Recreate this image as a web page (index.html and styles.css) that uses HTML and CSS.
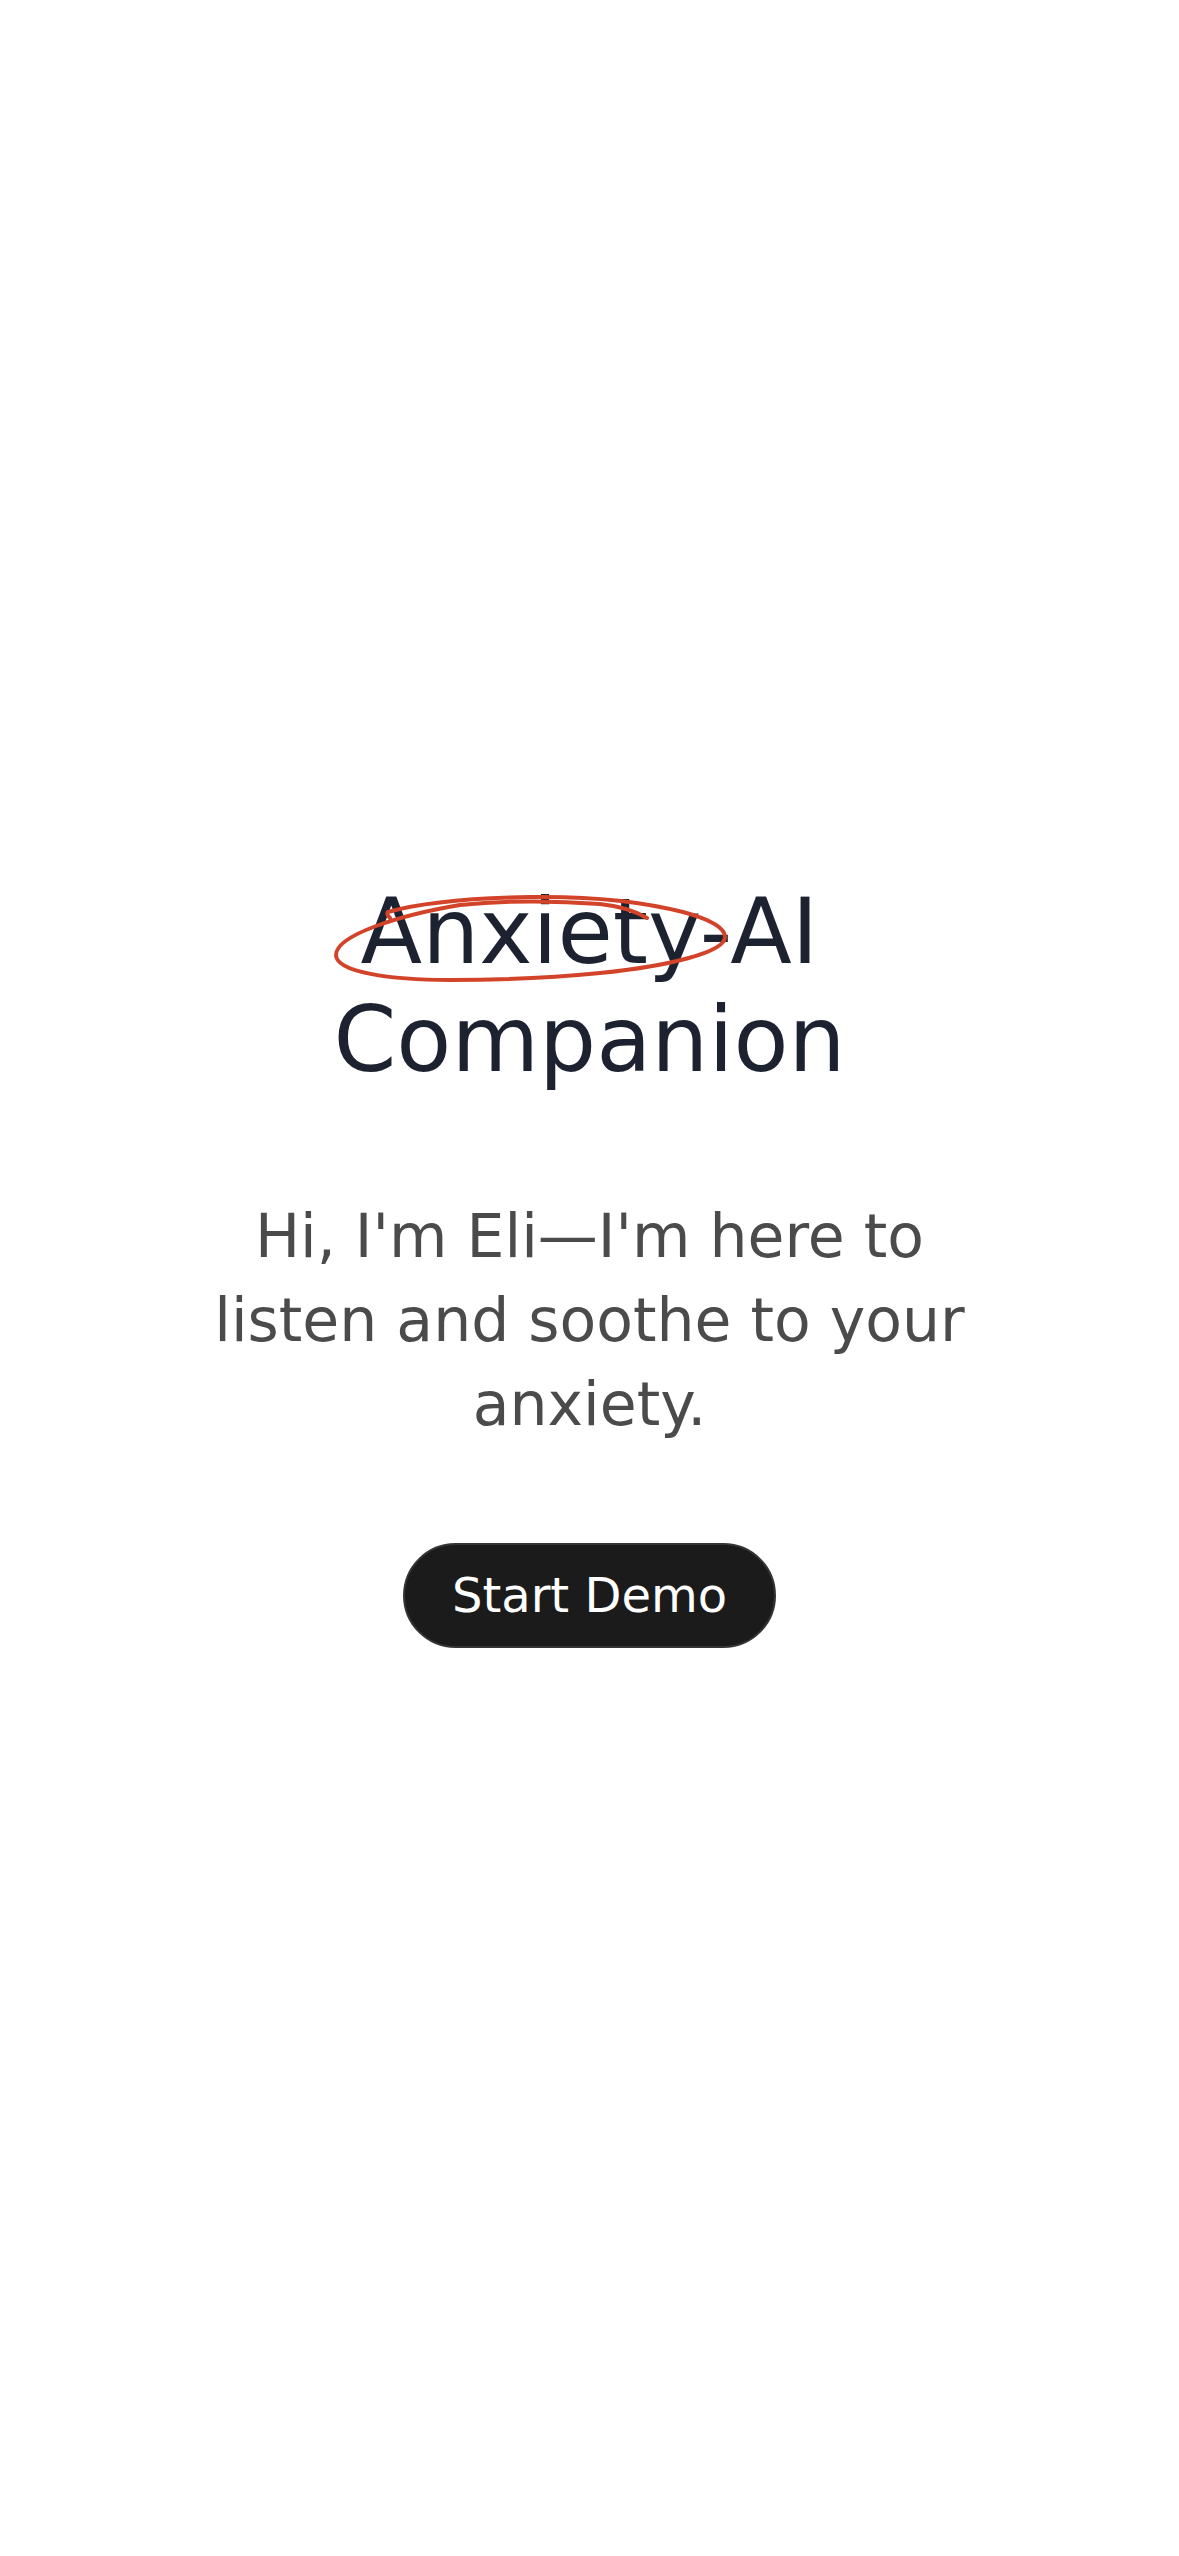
FILE: index.html
```html
<!DOCTYPE html>
<html lang="en">
<head>
<meta charset="utf-8">
<title>Anxiety-AI Companion</title>
<link rel="stylesheet" href="styles.css">
</head>
<body>
<main class="page">
  <section class="hero">
    <h1 class="title">
      <svg class="scribble" width="400" height="105" viewBox="0 0 400 105" aria-hidden="true">
        <path d="M 60 33 Q 56 29 58 27 C 90 18, 140 13, 200 12 C 260 11, 310 16, 353 27 C 375 33, 395 41, 395 52 C 395 67, 340 81, 270 88 C 230 92, 180 95, 120 95 C 60 95, 6 87, 6 70 C 6 50, 70 30, 130 20 C 180 15, 230 16, 270 19 C 290 21, 305 26, 317 33" />
      </svg>
      Anxiety-AI Companion
    </h1>
    <p class="subtitle">Hi, I'm Eli—I'm here to listen and soothe to your anxiety.</p>
    <button class="cta" type="button">Start Demo</button>
  </section>
</main>
</body>
</html>
```

FILE: styles.css
```css
html, body {
  margin: 0;
  padding: 0;
  background: #ffffff;
}

body {
  font-family: "DejaVu Sans", "Noto Sans", sans-serif;
}

.page {
  min-height: 2556px;
  box-sizing: border-box;
  padding-top: 878px;
  display: flex;
  flex-direction: column;
  align-items: center;
}

.hero {
  width: 800px;
  display: flex;
  flex-direction: column;
  align-items: center;
  text-align: center;
}

.title {
  position: relative;
  margin: 0;
  width: 100%;
  font-size: 90px;
  line-height: 108px;
  font-weight: 400;
  color: #1c2230;
}

.scribble {
  position: absolute;
  left: 50%;
  top: 7px;
  margin-left: -259.5px;
  overflow: visible;
  pointer-events: none;
}

.scribble path {
  fill: none;
  stroke: #d3432a;
  stroke-width: 4;
  stroke-linecap: round;
  stroke-linejoin: round;
}

.subtitle {
  margin: 100px 0 0;
  font-size: 60px;
  line-height: 84px;
  color: #4b4b4b;
}

.cta {
  margin-top: 97px;
  padding: 22px 47px;
  font-family: "DejaVu Sans", "Noto Sans", sans-serif;
  font-size: 48px;
  line-height: 57px;
  color: #ffffff;
  background: #1b1b1b;
  border: 2px solid #353535;
  border-radius: 999px;
  cursor: pointer;
}
```
